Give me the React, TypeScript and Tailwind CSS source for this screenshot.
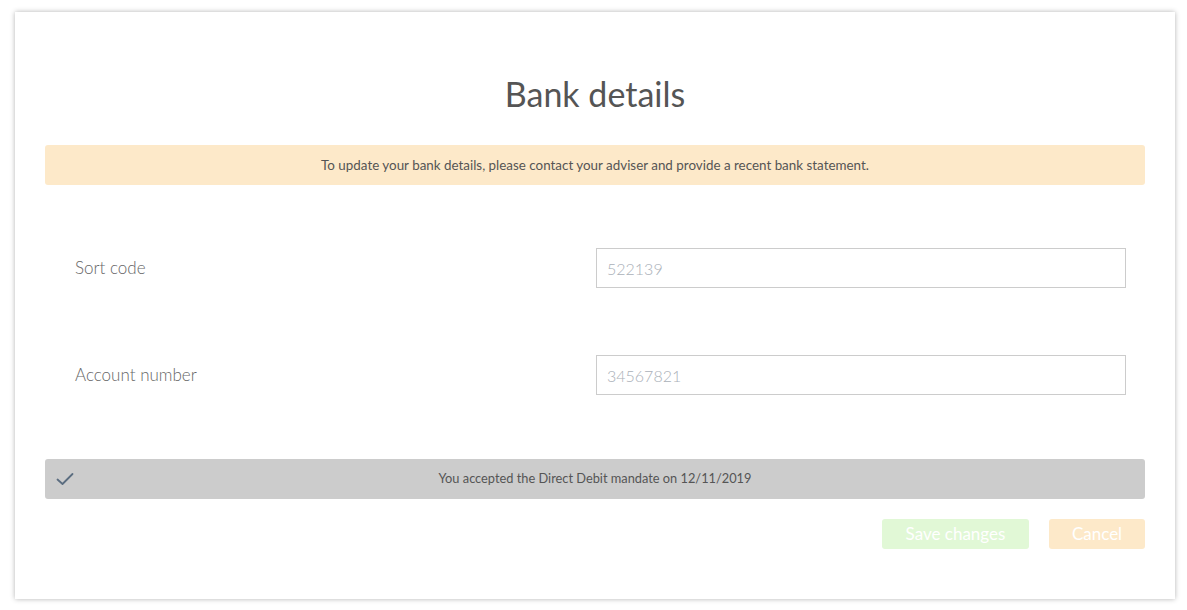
import React from 'react';

const font = { fontFamily: '"Source Sans Pro", Lato, "Open Sans", sans-serif' };

const Field = ({ label, value }: { label: string; value: string }) => (
  <div className="flex items-center h-[40px]">
    <div className="w-[551px] pl-[30px] text-[17px] font-light text-[#666]">{label}</div>
    <input
      readOnly
      placeholder={value}
      className="w-[530px] h-[40px] border border-[#ccc] px-[10px] text-[16px] font-light text-[#555] placeholder:text-[#aab0b8] outline-none"
    />
  </div>
);

const App = () => {
  return (
    <div className="min-h-[610px] bg-white pt-[12px] px-[15px]" style={font}>
      <div className="bg-white w-[1160px] shadow-[0_0_5px_rgba(0,0,0,0.3)] px-[30px] pt-[60px] pb-[50px]">
        <h2 className="text-center text-[34px] leading-[44px] text-[#555] font-normal">Bank details</h2>

        <div className="mt-[29px] h-[40px] bg-[#fde9c9] rounded-[3px] flex items-center justify-center text-[13.4px] text-[#555]">
          To update your bank details, please contact your adviser and provide a recent bank statement.
        </div>

        <div className="mt-[63px] flex flex-col gap-[67px]">
          <Field label="Sort code" value="522139" />
          <Field label="Account number" value="34567821" />
        </div>

        <div className="mt-[64px] h-[40px] bg-[#cccccc] rounded-[3px] relative flex items-center justify-center text-[12.8px] text-[#555]">
          <svg className="absolute left-[11px] top-[12px]" width="18" height="16" viewBox="0 0 18 16" fill="none">
            <path d="M1.5 8.5 L6.5 13 L16.5 3" stroke="#5b6d80" strokeWidth="1.8" strokeLinecap="round" strokeLinejoin="round" />
          </svg>
          You accepted the Direct Debit mandate on 12/11/2019
        </div>

        <div className="mt-[20px] flex justify-end gap-[20px]">
          <button className="w-[147px] h-[30px] rounded-[3px] bg-[#e1f8d6] text-white text-[17px]">Save changes</button>
          <button className="w-[96px] h-[30px] rounded-[3px] bg-[#fde9c9] text-white text-[17px]">Cancel</button>
        </div>
      </div>
    </div>
  );
};

export default App;
